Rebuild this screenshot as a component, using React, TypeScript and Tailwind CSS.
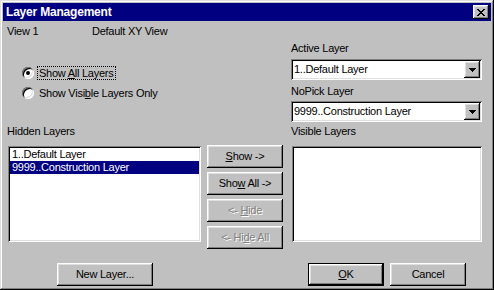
import React from "react";

const raised =
  "shadow-[inset_-1px_-1px_#000,inset_1px_1px_#fff,inset_-2px_-2px_#808080,inset_2px_2px_#dfdfdf]";
const sunken =
  "shadow-[inset_1px_1px_#808080,inset_-1px_-1px_#fff,inset_2px_2px_#000,inset_-2px_-2px_#dfdfdf]";

const Button = ({
  children,
  className = "",
  disabled = false,
  isDefault = false,
}: {
  children: React.ReactNode;
  className?: string;
  disabled?: boolean;
  isDefault?: boolean;
}) => (
  <div
    className={`flex h-[23px] w-[76px] items-center justify-center bg-[#c0c0c0] ${
      isDefault
        ? "shadow-[inset_0_0_0_1px_#000,inset_-2px_-2px_#000,inset_2px_2px_#fff,inset_-3px_-3px_#808080,inset_3px_3px_#dfdfdf]"
        : raised
    } ${disabled ? "text-[#808080] [text-shadow:1px_1px_#fff]" : ""} ${className}`}
  >
    {children}
  </div>
);

const Radio = ({ checked }: { checked?: boolean }) => (
  <div
    className={`flex h-3 w-3 items-center justify-center rounded-full bg-white shadow-[inset_1px_1px_#808080,inset_-1px_-1px_#fff,inset_2px_2px_#000,inset_-2px_-2px_#dfdfdf]`}
  >
    {checked && <div className="h-1 w-1 rounded-full bg-black" />}
  </div>
);

const Combo = ({ value }: { value: string }) => (
  <div className={`flex h-[21px] w-[191px] bg-white p-[2px] ${sunken}`}>
    <div className="flex-1 pl-[1px] leading-[17px]">{value}</div>
    <div className={`flex w-4 items-center justify-center bg-[#c0c0c0] ${raised}`}>
      <svg width="7" height="4" viewBox="0 0 7 4" shapeRendering="crispEdges">
        <path d="M0 0h7v1H0zM1 1h5v1H1zM2 2h3v1H2zM3 3h1v1H3z" fill="#000" />
      </svg>
    </div>
  </div>
);

export default function App() {
  return (
    <div className="w-[494px] h-[290px] bg-[#c0c0c0] p-[3px] font-['Liberation_Sans',Arial,sans-serif] text-[11px] tracking-[-0.25px] text-black shadow-[inset_-1px_-1px_#000,inset_1px_1px_#dfdfdf,inset_-2px_-2px_#808080,inset_2px_2px_#fff]">
      {/* title bar */}
      <div className="flex h-[18px] items-center justify-between bg-[#000080] pl-[3px] pr-[2px]">
        <span className="text-[12px] font-bold tracking-[-0.2px] text-white">Layer Management</span>
        <div className={`flex h-[14px] w-4 items-center justify-center bg-[#c0c0c0] ${raised}`}>
          <svg width="8" height="7" viewBox="0 0 8 7" shapeRendering="crispEdges" className="-ml-px">
            <path
              d="M0 0h2v1H0zM6 0h2v1H6zM1 1h2v1H1zM5 1h2v1H5zM2 2h4v1H2zM3 3h2v1H3zM2 4h4v1H2zM1 5h2v1H1zM5 5h2v1H5zM0 6h2v1H0zM6 6h2v1H6z"
              fill="#000"
            />
          </svg>
        </div>
      </div>

      <div className="pl-[4px]">
        <div className="mt-[4px] flex h-[13px] leading-[13px]">
          <span className="w-[85px]">View 1</span>
          <span>Default XY View</span>
        </div>

        <div className="flex">
          <div className="w-[284px] pl-[15px] pt-[28px]">
            <div className="flex h-[14px] items-center">
              <Radio checked />
              <span className="ml-[3px] border border-dotted border-black px-px leading-[12px]">
                Show <u>A</u>ll Layers
              </span>
            </div>
            <div className="mt-[6px] flex h-[14px] items-center">
              <Radio />
              <span className="ml-[3px] border border-transparent px-px leading-[12px]">
                Show Visi<u>b</u>le Layers Only
              </span>
            </div>
          </div>
          <div className="w-[193px]">
            <div className="mt-[4px] h-[13px] leading-[13px]">Active Layer</div>
            <div className="mt-[4px]">
              <Combo value="1..Default Layer" />
            </div>
            <div className="mt-[5px] h-[13px] leading-[13px]">NoPick Layer</div>
            <div className="mt-[3px]">
              <Combo value="9999..Construction Layer" />
            </div>
          </div>
        </div>

        <div className="mt-[3px] flex h-[13px] leading-[13px]">
          <span className="w-[284px]">Hidden Layers</span>
          <span>Visible Layers</span>
        </div>

        <div className="mt-[8px] flex items-start">
          <div className={`ml-px h-[96px] w-[193px] bg-white p-[2px] ${sunken}`}>
            <div className="h-[13px] pl-[2px] leading-[13px]">1..Default Layer</div>
            <div className="h-[13px] bg-[#000080] pl-[2px] leading-[13px] text-white">
              9999..Construction Layer
            </div>
          </div>
          <div className="-mt-px ml-[6px] flex flex-col gap-[4px]">
            <Button>
              <span>
                <u>S</u>how -&gt;
              </span>
            </Button>
            <Button>
              <span>
                Sho<u>w</u> All -&gt;
              </span>
            </Button>
            <Button disabled>
              <span>
                &lt;- <u>H</u>ide
              </span>
            </Button>
            <Button disabled>
              <span>
                &lt;- Hi<u>d</u>e All
              </span>
            </Button>
          </div>
          <div className={`ml-[9px] h-[96px] w-[190px] bg-white ${sunken}`} />
        </div>

        <div className="mt-[14px] flex">
          <Button className="ml-[50px] w-[96px]">New Layer...</Button>
          <Button isDefault className="ml-[155px]">
            <span>
              <u>O</u>K
            </span>
          </Button>
          <Button className="ml-[6px]">Cancel</Button>
        </div>
      </div>
    </div>
  );
}
